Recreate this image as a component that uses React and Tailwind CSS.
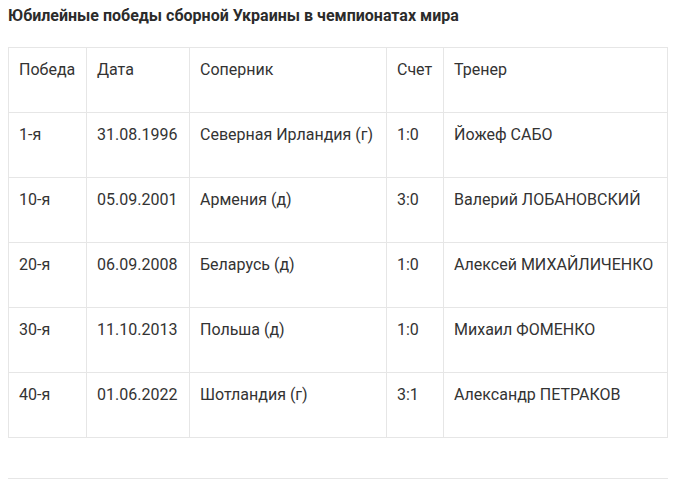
import React from 'react';

const rows = [
    ['1-я', '31.08.1996', 'Северная Ирландия (г)', '1:0', 'Йожеф САБО'],
    ['10-я', '05.09.2001', 'Армения (д)', '3:0', 'Валерий ЛОБАНОВСКИЙ'],
    ['20-я', '06.09.2008', 'Беларусь (д)', '1:0', 'Алексей МИХАЙЛИЧЕНКО'],
    ['30-я', '11.10.2013', 'Польша (д)', '1:0', 'Михаил ФОМЕНКО'],
    ['40-я', '01.06.2022', 'Шотландия (г)', '3:1', 'Александр ПЕТРАКОВ'],
];

const widths = ['w-[78px]', 'w-[103px]', 'w-[197px]', 'w-[57px]', 'w-[224px]'];

const App = () => {
    return (
        <div className="bg-white w-[693px] h-[481px] overflow-hidden text-[#333333]" style={{ fontFamily: 'Roboto, "Liberation Sans", sans-serif' }}>
            <div className="px-2 pt-[4px]">
                <h2 className="text-[16px] font-bold leading-6 text-[#2b2b2b]">
                    Юбилейные победы сборной Украины в чемпионатах мира
                </h2>

                <table className="mt-[19px] w-[660px] border-collapse table-fixed text-[16px]">
                    <colgroup>
                        {widths.map((w, i) => (
                            <col key={i} className={w} />
                        ))}
                    </colgroup>
                    <tbody>
                        <tr>
                            {['Победа', 'Дата', 'Соперник', 'Счет', 'Тренер'].map((h, i) => (
                                <td key={i} className="border border-[#e6e6e6] px-[10px] pt-[10px] pb-[30px] leading-6 align-top whitespace-nowrap">
                                    {h}
                                </td>
                            ))}
                        </tr>
                        {rows.map((r, ri) => (
                            <tr key={ri}>
                                {r.map((c, ci) => (
                                    <td key={ci} className="border border-[#e6e6e6] px-[10px] pt-[10px] pb-[30px] leading-6 align-top whitespace-nowrap">
                                        {c}
                                    </td>
                                ))}
                            </tr>
                        ))}
                    </tbody>
                </table>

                <div className="mt-[40px] w-[660px] border-t border-[#e6e6e6]"></div>
            </div>
        </div>
    );
};

export default App;
